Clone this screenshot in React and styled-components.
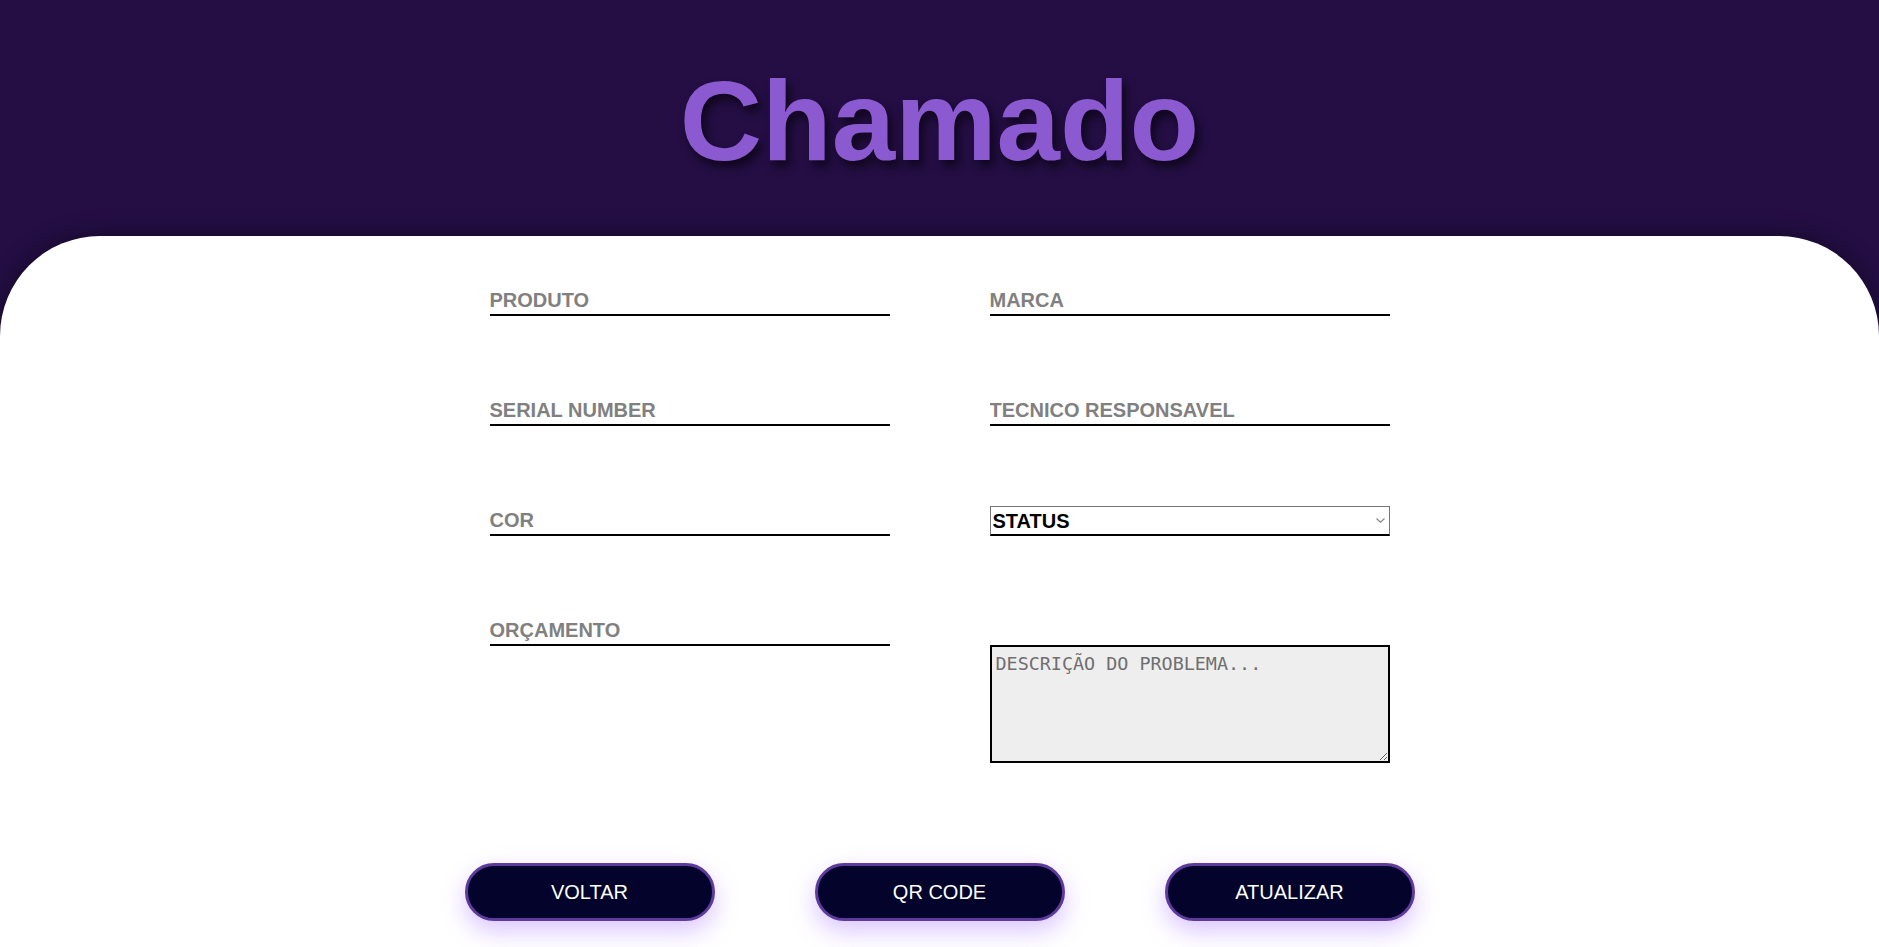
import React from 'react';
import styled, { createGlobalStyle } from 'styled-components';

const GlobalStyle = createGlobalStyle`
  * {
    box-sizing: border-box;
  }

  body {
    margin: 0;
    background-color: #240e44;
    font-family: 'Liberation Sans', Arial, sans-serif;
  }
`;

const Page = styled.div`
  display: flex;
  flex-direction: column;
  min-height: 100vh;
`;

const Header = styled.header`
  align-items: center;
  display: flex;
  height: 236px;
  justify-content: center;
`;

const Title = styled.h1`
  color: #8c5ad0;
  font-family: 'Liberation Sans', Arial, sans-serif;
  font-size: 114px;
  font-weight: 700;
  margin: 0;
  padding-top: 4px;
  text-shadow: 4px 6px 10px rgba(0, 0, 0, 0.6);
`;

const Panel = styled.main`
  background-color: #ffffff;
  border-radius: 100px 100px 0 0;
  box-shadow: 0 0 24px rgba(0, 0, 0, 0.45);
  display: flex;
  flex: 1;
  flex-direction: column;
  align-items: center;
  padding: 50px 0 40px;
`;

const Form = styled.form`
  display: grid;
  grid-template-columns: 400px 400px;
  column-gap: 100px;
  row-gap: 80px;
`;

const Input = styled.input`
  background: transparent;
  border: none;
  border-bottom: 2px solid #000000;
  color: #000000;
  font-family: 'Liberation Sans', Arial, sans-serif;
  font-size: 20px;
  font-weight: 700;
  height: 30px;
  outline: none;
  padding: 0;
  width: 400px;

  &::placeholder {
    color: #808080;
    opacity: 1;
  }
`;

const SelectWrap = styled.div`
  height: 30px;
  position: relative;
  width: 400px;
`;

const Select = styled.select`
  appearance: none;
  background-color: #ffffff;
  border: 1px solid #767676;
  border-bottom: 2px solid #000000;
  border-radius: 0;
  color: #000000;
  font-family: 'Liberation Sans', Arial, sans-serif;
  font-size: 20px;
  font-weight: 700;
  height: 30px;
  outline: none;
  padding: 0 2px;
  width: 100%;
`;

const Chevron = styled.svg`
  pointer-events: none;
  position: absolute;
  right: 5px;
  top: 12px;
`;

const TextArea = styled.textarea`
  background-color: #eeeeee;
  border: 2px solid #000000;
  font-family: 'DejaVu Sans Mono', monospace;
  font-size: 18.4px;
  height: 118px;
  margin-top: 29px;
  outline: none;
  padding: 6px 4px;
  width: 400px;

  &::placeholder {
    color: #6f6f6f;
  }
`;

const Actions = styled.div`
  display: flex;
  gap: 100px;
  justify-content: center;
  margin-top: 100px;
`;

const Button = styled.button`
  background-color: #03032b;
  border: 3px solid #5d3a9b;
  border-radius: 30px;
  box-shadow: 0 10px 24px rgba(150, 90, 255, 0.35);
  color: #ffffff;
  cursor: pointer;
  font-family: 'Liberation Sans', Arial, sans-serif;
  font-size: 20px;
  height: 58px;
  width: 250px;
`;

const fields = [
  ['PRODUTO', 'MARCA'],
  ['SERIAL NUMBER', 'TECNICO RESPONSAVEL'],
];

const App = () => (
  <Page>
    <GlobalStyle />
    <Header>
      <Title>Chamado</Title>
    </Header>
    <Panel>
      <Form onSubmit={(e) => e.preventDefault()}>
        {fields.flat().map((name) => (
          <Input key={name} placeholder={name} />
        ))}
        <Input placeholder="COR" />
        <SelectWrap>
          <Select defaultValue="">
            <option value="" disabled>STATUS</option>
            <option value="aberto">ABERTO</option>
            <option value="andamento">EM ANDAMENTO</option>
            <option value="concluido">CONCLUÍDO</option>
          </Select>
          <Chevron width="9" height="5" viewBox="0 0 9 5">
            <path d="M0.5 0.5 L4.5 4.3 L8.5 0.5" fill="none" stroke="#8a8a8a" strokeWidth="1.2" />
          </Chevron>
        </SelectWrap>
        <Input placeholder="ORÇAMENTO" />
        <TextArea placeholder="DESCRIÇÃO DO PROBLEMA..." />
      </Form>
      <Actions>
        <Button type="button">VOLTAR</Button>
        <Button type="button">QR CODE</Button>
        <Button type="button">ATUALIZAR</Button>
      </Actions>
    </Panel>
  </Page>
);

export default App;
